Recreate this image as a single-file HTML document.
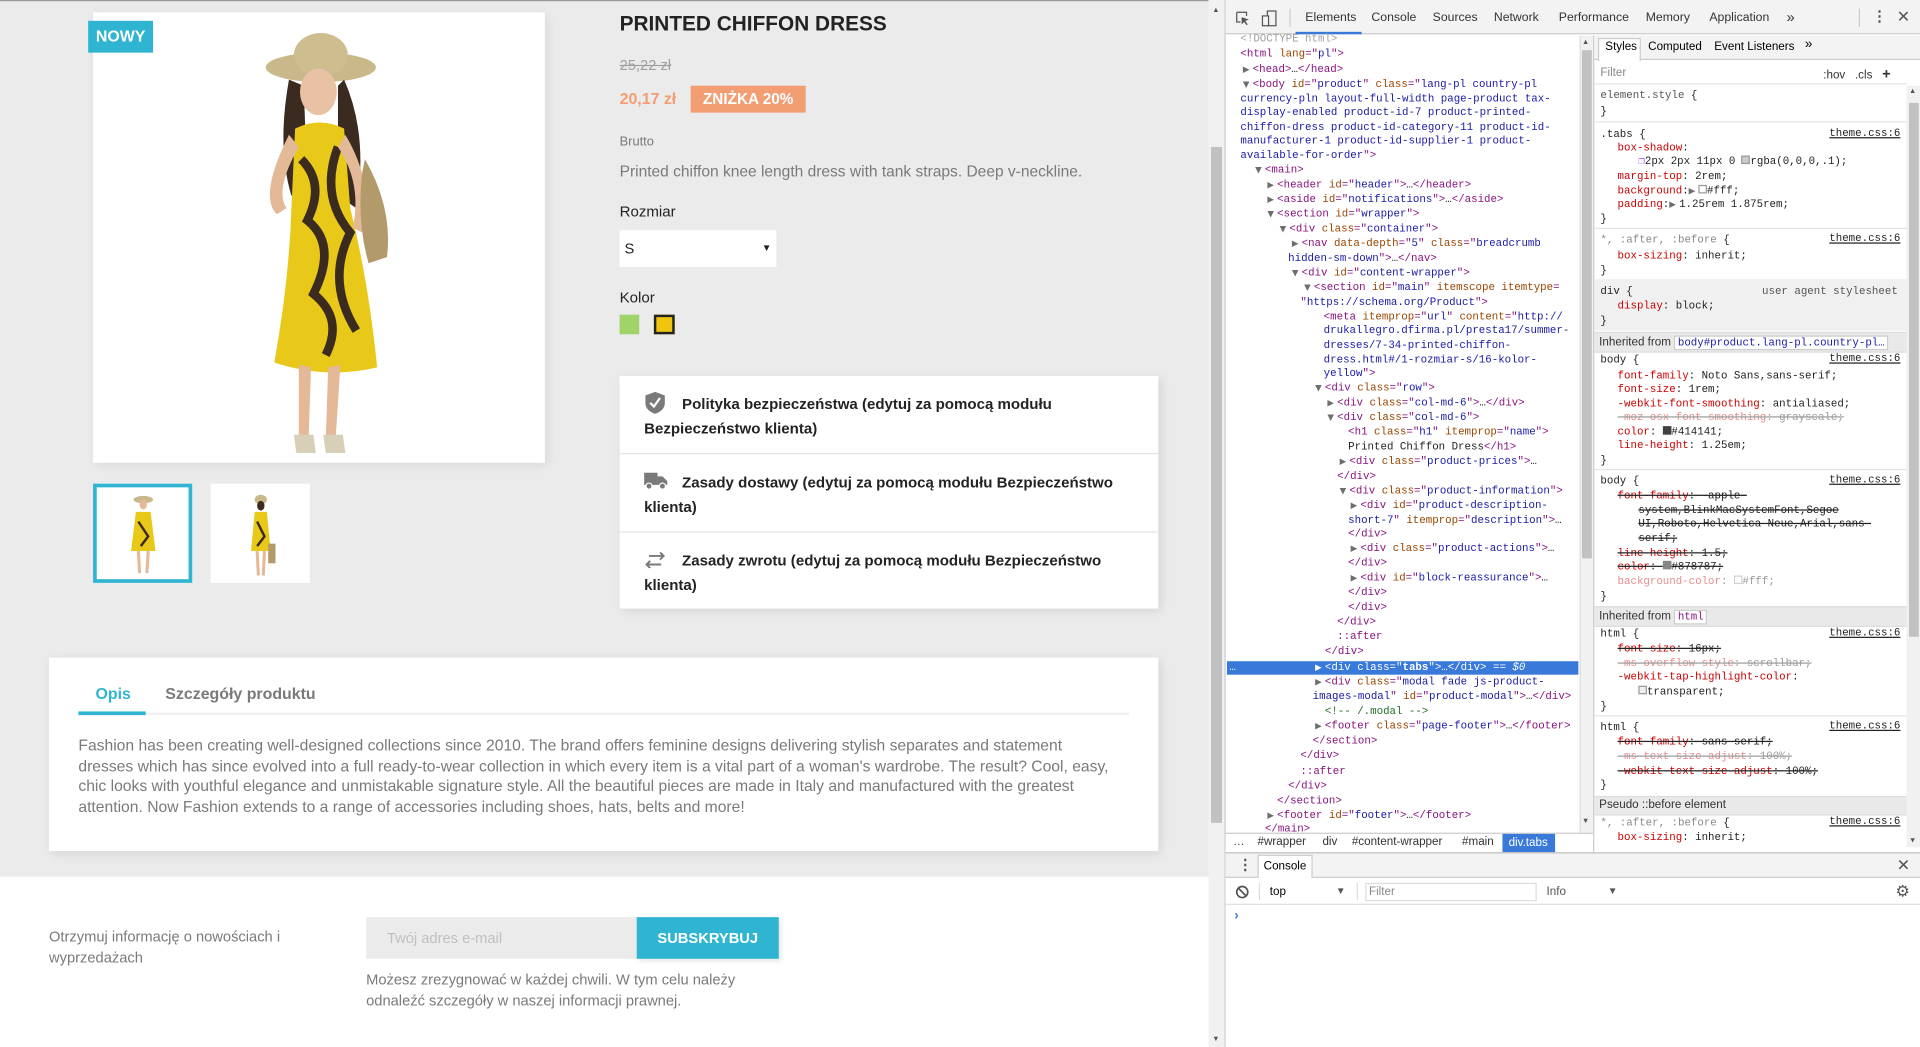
<!DOCTYPE html>
<html><head><meta charset="utf-8">
<style>
*{box-sizing:border-box;margin:0;padding:0}
html,body{width:1920px;height:1047px;overflow:hidden;background:#fff}
#root{position:absolute;left:0;top:0;width:1568px;height:855px;transform:scale(1.22449);transform-origin:0 0;font-family:"Liberation Sans","Noto Sans CJK SC",sans-serif;overflow:hidden}
.abs{position:absolute}
.page{left:0;top:0;width:987px;height:855px;background:#fff}
.main{left:0;top:0;width:987px;height:716px;background:#ebebeb}
.nw{white-space:nowrap}
.dt{left:1000px;top:0;width:568px;height:855px;background:#fff;border-left:1px solid #ccc;font-family:"Liberation Sans",sans-serif;font-size:10px;color:#333}
.l{position:absolute;white-space:nowrap;font-family:"Liberation Mono",monospace;font-size:8.8px;line-height:12px;color:#222}
.t{color:#881280}.a{color:#994500}.v{color:#1a1aa6}.g{color:#a0a0a0}.c{color:#236e25}
.tr{display:inline-block;width:8px;font-size:7px;color:#6e6e6e;font-family:"DejaVu Sans",sans-serif}
.p{color:#c80000}.s{text-decoration:line-through}.f{opacity:.45}
.lnk{position:absolute;right:16px;text-decoration:underline;color:#222;font-family:"Liberation Mono",monospace;font-size:8.8px}
.band{position:absolute;left:1302px;width:255px;background:#e9e9e9;border-top:1px solid #ddd;border-bottom:1px solid #ddd;font-size:9.5px;color:#333;white-space:nowrap;padding-left:4px}
</style></head><body><div id="root">

<div class="abs page"></div>
<div class="abs main"></div>
<div class="abs" style="left:0;top:0;width:987px;height:1px;background:#999"></div>

<div class="abs" style="left:76px;top:10px;width:369px;height:368px;background:#fff;box-shadow:2px 2px 8px rgba(0,0,0,.08)"></div>
<svg class="abs" style="left:76px;top:10px" width="369" height="368" viewBox="0 0 369 368">
<ellipse cx="186" cy="45" rx="45" ry="12" fill="#c9b98a"/><ellipse cx="186" cy="35" rx="22" ry="18" fill="#cdbd8f"/>
<path d="M160 55 Q150 110 162 150 L175 140 L172 60Z" fill="#3a2a20"/>
<path d="M205 55 Q225 100 215 160 L200 150 L200 60Z" fill="#3a2a20"/>
<ellipse cx="184" cy="65" rx="15" ry="19" fill="#e9c2a6"/>
<path d="M165 95 Q185 85 205 95 L210 160 Q225 220 232 290 Q190 300 148 286 Q160 220 162 160Z" fill="#e8c91a"/>
<path d="M170 120 Q190 140 175 170 Q200 190 180 230 Q205 250 190 280 M200 110 Q185 150 210 180 Q190 220 215 260" stroke="#3b2b1f" stroke-width="7" fill="none"/>
<path d="M160 100 Q135 150 150 165 L158 160 Q148 145 168 110Z" fill="#e4b998"/>
<path d="M206 100 Q230 140 220 180 L212 176 Q220 140 200 110Z" fill="#e4b998"/>
<path d="M222 120 Q245 160 240 200 L225 205 Q215 170 220 130Z" fill="#b39a6a"/>
<path d="M168 288 L178 290 L176 350 L168 350Z M192 290 L202 288 L198 350 L190 350Z" fill="#e4b998"/>
<path d="M164 345 L180 345 L182 360 L166 360Z M188 345 L204 345 L206 360 L190 360Z" fill="#d8cfb8"/>
</svg>
<div class="abs" style="left:72px;top:17px;width:53px;height:26px;background:#2fb5d2;color:#fff;font-weight:bold;font-size:13px;line-height:26px;text-align:center">NOWY</div>

<div class="abs" style="left:76px;top:395px;width:81px;height:81px;background:#fff;border:3px solid #2fb5d2"></div>
<svg class="abs" style="left:79px;top:398px" width="75" height="75"><ellipse cx="38" cy="10" rx="8" ry="3" fill="#c9b98a"/><ellipse cx="38" cy="14" rx="3" ry="4" fill="#e4b998"/><path d="M32 20 L44 20 L48 52 L28 52Z" fill="#e8c91a"/><path d="M34 28 L42 40 L36 48" stroke="#3b2b1f" stroke-width="2" fill="none"/><path d="M34 52 L35 70 M42 52 L41 70" stroke="#e4b998" stroke-width="2.5"/></svg>
<div class="abs" style="left:172px;top:395px;width:81px;height:81px;background:#fff"></div>
<svg class="abs" style="left:175px;top:398px" width="75" height="75"><ellipse cx="38" cy="10" rx="5" ry="4" fill="#c9b98a"/><ellipse cx="38" cy="15" rx="3" ry="4" fill="#3a2a20"/><path d="M33 20 L43 20 L46 52 L30 52Z" fill="#e8c91a"/><path d="M35 28 L41 40 L35 48" stroke="#3b2b1f" stroke-width="2" fill="none"/><path d="M44 46 L50 46 L50 62 L44 62Z" fill="#b39a6a"/><path d="M35 52 L36 72 M41 52 L40 72" stroke="#e4b998" stroke-width="2.5"/></svg>

<div class="abs nw" style="left:506px;top:10px;font-size:17px;font-weight:bold;color:#232323;line-height:20px">PRINTED CHIFFON DRESS</div>
<div class="abs nw" style="left:506px;top:46px;font-size:12px;color:#a0a0a0;text-decoration:line-through">25,22 zł</div>
<div class="abs nw" style="left:506px;top:73px;font-size:13px;color:#f39d72;font-weight:bold">20,17 zł</div>
<div class="abs nw" style="left:564px;top:70px;width:94px;height:22px;background:#f39d72;color:#fff;font-weight:bold;font-size:12.5px;line-height:22px;text-align:center">ZNIŻKA 20%</div>
<div class="abs nw" style="left:506px;top:110px;font-size:10.5px;color:#7a7a7a">Brutto</div>
<div class="abs nw" style="left:506px;top:133px;font-size:12.7px;color:#7a7a7a">Printed chiffon knee length dress with tank straps. Deep v-neckline.</div>
<div class="abs nw" style="left:506px;top:166px;font-size:12.3px;color:#232323">Rozmiar</div>
<div class="abs" style="left:506px;top:188px;width:128px;height:30px;background:#fff;font-size:12px;color:#232323;line-height:30px;padding-left:4px">S<span style="position:absolute;right:4px;font-size:8px">▼</span></div>
<div class="abs nw" style="left:506px;top:236px;font-size:12.3px;color:#232323">Kolor</div>
<div class="abs" style="left:506px;top:257px;width:16px;height:16px;background:#a0d468"></div>
<div class="abs" style="left:534px;top:257px;width:17px;height:16px;background:#f1c40f;border:2px solid #232323"></div>

<div class="abs" style="left:506px;top:307px;width:440px;height:190px;background:#fff;box-shadow:2px 2px 8px rgba(0,0,0,.1)"></div>
<div class="abs" style="left:506px;top:370px;width:440px;height:1px;background:#e5e5e5"></div>
<div class="abs" style="left:506px;top:434px;width:440px;height:1px;background:#e5e5e5"></div>
<svg class="abs" style="left:527px;top:320px" width="16" height="18" viewBox="0 0 16 18"><path d="M8 0 L16 3 L16 9 Q16 15 8 18 Q0 15 0 9 L0 3Z" fill="#7a7a7a"/><path d="M4 9 L7 12 L12 5" stroke="#fff" stroke-width="1.8" fill="none"/></svg>
<svg class="abs" style="left:526px;top:386px" width="19" height="14" viewBox="0 0 19 14"><rect x="0" y="0" width="11" height="10" fill="#7a7a7a"/><path d="M11 3 L15 3 L19 7 L19 10 L11 10Z" fill="#7a7a7a"/><circle cx="4" cy="11" r="2.5" fill="#7a7a7a" stroke="#fff"/><circle cx="15" cy="11" r="2.5" fill="#7a7a7a" stroke="#fff"/></svg>
<svg class="abs" style="left:527px;top:451px" width="16" height="13" viewBox="0 0 16 13"><path d="M3 3 H15 M12 0 L15 3 L12 6 M13 10 H1 M4 7 L1 10 L4 13" stroke="#7a7a7a" stroke-width="1.6" fill="none"/></svg>
<div class="abs nw" style="left:526px;top:320px;font-size:12.3px;font-weight:bold;color:#232323;line-height:20px"><span style="padding-left:31px"></span>Polityka bezpieczeństwa (edytuj za pomocą modułu<br>Bezpieczeństwo klienta)</div>
<div class="abs nw" style="left:526px;top:384px;font-size:12.3px;font-weight:bold;color:#232323;line-height:20px"><span style="padding-left:31px"></span>Zasady dostawy (edytuj za pomocą modułu Bezpieczeństwo<br>klienta)</div>
<div class="abs nw" style="left:526px;top:448px;font-size:12.3px;font-weight:bold;color:#232323;line-height:20px"><span style="padding-left:31px"></span>Zasady zwrotu (edytuj za pomocą modułu Bezpieczeństwo<br>klienta)</div>

<div class="abs" style="left:40px;top:537px;width:906px;height:158px;background:#fff;box-shadow:2px 2px 8px rgba(0,0,0,.1)"></div>
<div class="abs" style="left:64px;top:582px;width:858px;height:2px;background:#f1f1f1"></div>
<div class="abs" style="left:64px;top:581px;width:55px;height:3px;background:#2fb5d2"></div>
<div class="abs nw" style="left:78px;top:559px;font-size:13px;font-weight:bold;color:#2fb5d2">Opis</div>
<div class="abs nw" style="left:135px;top:559px;font-size:13px;font-weight:bold;color:#7a7a7a">Szczegóły produktu</div>
<div class="abs nw" style="left:64px;top:601px;font-size:12.8px;line-height:16.5px;color:#7a7a7a">Fashion has been creating well-designed collections since 2010. The brand offers feminine designs delivering stylish separates and statement<br>dresses which has since evolved into a full ready-to-wear collection in which every item is a vital part of a woman's wardrobe. The result? Cool, easy,<br>chic looks with youthful elegance and unmistakable signature style. All the beautiful pieces are made in Italy and manufactured with the greatest<br>attention. Now Fashion extends to a range of accessories including shoes, hats, belts and more!</div>

<div class="abs nw" style="left:40px;top:757px;font-size:12px;line-height:16.5px;color:#7a7a7a">Otrzymuj informację o nowościach i<br>wyprzedażach</div>
<div class="abs nw" style="left:299px;top:749px;width:221px;height:34px;background:#ebebeb;font-size:12px;line-height:34px;color:#c0c0c0;padding-left:17px">Twój adres e-mail</div>
<div class="abs nw" style="left:520px;top:749px;width:116px;height:34px;background:#2fb5d2;font-size:12px;font-weight:bold;line-height:34px;color:#fff;text-align:center;box-shadow:2px 2px 4px rgba(0,0,0,.1)">SUBSKRYBUJ</div>
<div class="abs nw" style="left:299px;top:792px;font-size:12px;line-height:16.5px;color:#7a7a7a">Możesz zrezygnować w każdej chwili. W tym celu należy<br>odnaleźć szczegóły w naszej informacji prawnej.</div>

<div class="abs" style="left:987px;top:0;width:13px;height:855px;background:#f1f1f1"></div>
<div class="abs" style="left:989px;top:120px;width:9px;height:552px;background:#c1c1c1"></div>
<div class="abs" style="left:990px;top:6px;font-size:6px;color:#555">▲</div>
<div class="abs" style="left:990px;top:846px;font-size:6px;color:#555">▼</div>

<div class="abs dt"></div>
<div class="abs" style="left:1001px;top:0;width:567px;height:28px;background:#f3f3f3;border-bottom:1px solid #ccc"></div>
<svg class="abs" style="left:1009px;top:9px" width="12" height="12"><path d="M1 1 H9 V4 M1 1 V9 H4" stroke="#555" fill="none"/><path d="M5 5 L11 7 L8 8 L10 11 L9 11.5 L7 9 L5 11Z" fill="#555"/></svg>
<svg class="abs" style="left:1030px;top:8px" width="14" height="14"><rect x="5" y="1" width="7" height="12" stroke="#555" fill="none"/><rect x="1" y="5" width="5" height="8" stroke="#555" fill="#f3f3f3"/></svg>
<div class="abs" style="left:1053px;top:7px;width:1px;height:15px;background:#ccc"></div>
<div class="abs nw" style="left:1066px;top:9px;font-size:10px;color:#333">Elements</div>
<div class="abs" style="left:1058px;top:26px;width:54px;height:2px;background:#3879d9"></div>
<div class="abs nw" style="left:1120px;top:9px;font-size:10px;color:#333">Console</div>
<div class="abs nw" style="left:1170px;top:9px;font-size:10px;color:#333">Sources</div>
<div class="abs nw" style="left:1220px;top:9px;font-size:10px;color:#333">Network</div>
<div class="abs nw" style="left:1273px;top:9px;font-size:10px;color:#333">Performance</div>
<div class="abs nw" style="left:1344px;top:9px;font-size:10px;color:#333">Memory</div>
<div class="abs nw" style="left:1396px;top:9px;font-size:10px;color:#333">Application</div>
<div class="abs nw" style="left:1459px;top:7px;font-size:12px;color:#333">»</div>
<div class="abs" style="left:1518px;top:7px;width:1px;height:15px;background:#ccc"></div>
<div class="abs nw" style="left:1529px;top:6px;font-size:12px;color:#555;font-weight:bold">⋮</div>
<div class="abs nw" style="left:1549px;top:6px;font-size:13px;color:#555">✕</div>

<div class="l g" style="top:26px;left:1013px">&lt;!DOCTYPE html&gt;</div>
<div class="l" style="top:38px;left:1013px"><span class="t">&lt;html</span> <span class="a">lang</span><span class="t">="</span><span class="v">pl</span><span class="t">"&gt;</span></div>
<div class="l" style="top:51px;left:1015px"><span class="tr">▶</span><span class="t">&lt;head&gt;</span>…<span class="t">&lt;/head&gt;</span></div>
<div class="l" style="top:63px;left:1015px"><span class="tr">▼</span><span class="t">&lt;body</span> <span class="a">id</span><span class="t">="</span><span class="v">product</span><span class="t">"</span> <span class="a">class</span><span class="t">="</span><span class="v">lang-pl country-pl</span></div>
<div class="l v" style="top:75px;left:1013px">currency-pln layout-full-width page-product tax-</div>
<div class="l v" style="top:86px;left:1013px">display-enabled product-id-7 product-printed-</div>
<div class="l v" style="top:98px;left:1013px">chiffon-dress product-id-category-11 product-id-</div>
<div class="l v" style="top:109px;left:1013px">manufacturer-1 product-id-supplier-1 product-</div>
<div class="l" style="top:121px;left:1013px"><span class="v">available-for-order</span><span class="t">"&gt;</span></div>
<div class="l" style="top:133px;left:1025px"><span class="tr">▼</span><span class="t">&lt;main&gt;</span></div>
<div class="l" style="top:145px;left:1035px"><span class="tr">▶</span><span class="t">&lt;header</span> <span class="a">id</span><span class="t">="</span><span class="v">header</span><span class="t">"&gt;</span>…<span class="t">&lt;/header&gt;</span></div>
<div class="l" style="top:157px;left:1035px"><span class="tr">▶</span><span class="t">&lt;aside</span> <span class="a">id</span><span class="t">="</span><span class="v">notifications</span><span class="t">"&gt;</span>…<span class="t">&lt;/aside&gt;</span></div>
<div class="l" style="top:169px;left:1035px"><span class="tr">▼</span><span class="t">&lt;section</span> <span class="a">id</span><span class="t">="</span><span class="v">wrapper</span><span class="t">"&gt;</span></div>
<div class="l" style="top:181px;left:1045px"><span class="tr">▼</span><span class="t">&lt;div</span> <span class="a">class</span><span class="t">="</span><span class="v">container</span><span class="t">"&gt;</span></div>
<div class="l" style="top:193px;left:1055px"><span class="tr">▶</span><span class="t">&lt;nav</span> <span class="a">data-depth</span><span class="t">="</span><span class="v">5</span><span class="t">"</span> <span class="a">class</span><span class="t">="</span><span class="v">breadcrumb</span></div>
<div class="l" style="top:205px;left:1052px"><span class="v">hidden-sm-down</span><span class="t">"&gt;</span>…<span class="t">&lt;/nav&gt;</span></div>
<div class="l" style="top:217px;left:1055px"><span class="tr">▼</span><span class="t">&lt;div</span> <span class="a">id</span><span class="t">="</span><span class="v">content-wrapper</span><span class="t">"&gt;</span></div>
<div class="l" style="top:229px;left:1065px"><span class="tr">▼</span><span class="t">&lt;section</span> <span class="a">id</span><span class="t">="</span><span class="v">main</span><span class="t">"</span> <span class="a">itemscope itemtype</span><span class="t">=</span></div>
<div class="l" style="top:241px;left:1062px"><span class="t">"</span><span class="v">https://schema.org/Product</span><span class="t">"&gt;</span></div>
<div class="l" style="top:253px;left:1081px"><span class="t">&lt;meta</span> <span class="a">itemprop</span><span class="t">="</span><span class="v">url</span><span class="t">"</span> <span class="a">content</span><span class="t">="</span><span class="v">http://</span></div>
<div class="l v" style="top:264px;left:1081px">drukallegro.dfirma.pl/presta17/summer-</div>
<div class="l v" style="top:276px;left:1081px">dresses/7-34-printed-chiffon-</div>
<div class="l v" style="top:288px;left:1081px">dress.html#/1-rozmiar-s/16-kolor-</div>
<div class="l" style="top:299px;left:1081px"><span class="v">yellow</span><span class="t">"&gt;</span></div>
<div class="l" style="top:311px;left:1074px"><span class="tr">▼</span><span class="t">&lt;div</span> <span class="a">class</span><span class="t">="</span><span class="v">row</span><span class="t">"&gt;</span></div>
<div class="l" style="top:323px;left:1084px"><span class="tr">▶</span><span class="t">&lt;div</span> <span class="a">class</span><span class="t">="</span><span class="v">col-md-6</span><span class="t">"&gt;</span>…<span class="t">&lt;/div&gt;</span></div>
<div class="l" style="top:335px;left:1084px"><span class="tr">▼</span><span class="t">&lt;div</span> <span class="a">class</span><span class="t">="</span><span class="v">col-md-6</span><span class="t">"&gt;</span></div>
<div class="l" style="top:347px;left:1101px"><span class="t">&lt;h1</span> <span class="a">class</span><span class="t">="</span><span class="v">h1</span><span class="t">"</span> <span class="a">itemprop</span><span class="t">="</span><span class="v">name</span><span class="t">"&gt;</span></div>
<div class="l" style="top:359px;left:1101px">Printed Chiffon Dress<span class="t">&lt;/h1&gt;</span></div>
<div class="l" style="top:371px;left:1094px"><span class="tr">▶</span><span class="t">&lt;div</span> <span class="a">class</span><span class="t">="</span><span class="v">product-prices</span><span class="t">"&gt;</span>…</div>
<div class="l t" style="top:383px;left:1092px">&lt;/div&gt;</div>
<div class="l" style="top:395px;left:1094px"><span class="tr">▼</span><span class="t">&lt;div</span> <span class="a">class</span><span class="t">="</span><span class="v">product-information</span><span class="t">"&gt;</span></div>
<div class="l" style="top:407px;left:1103px"><span class="tr">▶</span><span class="t">&lt;div</span> <span class="a">id</span><span class="t">="</span><span class="v">product-description-</span></div>
<div class="l" style="top:419px;left:1101px"><span class="v">short-7</span><span class="t">"</span> <span class="a">itemprop</span><span class="t">="</span><span class="v">description</span><span class="t">"&gt;</span>…</div>
<div class="l t" style="top:430px;left:1101px">&lt;/div&gt;</div>
<div class="l" style="top:442px;left:1103px"><span class="tr">▶</span><span class="t">&lt;div</span> <span class="a">class</span><span class="t">="</span><span class="v">product-actions</span><span class="t">"&gt;</span>…</div>
<div class="l t" style="top:454px;left:1101px">&lt;/div&gt;</div>
<div class="l" style="top:466px;left:1103px"><span class="tr">▶</span><span class="t">&lt;div</span> <span class="a">id</span><span class="t">="</span><span class="v">block-reassurance</span><span class="t">"&gt;</span>…</div>
<div class="l t" style="top:478px;left:1101px">&lt;/div&gt;</div>
<div class="l t" style="top:490px;left:1101px">&lt;/div&gt;</div>
<div class="l t" style="top:502px;left:1092px">&lt;/div&gt;</div>
<div class="l t" style="top:514px;left:1092px">::after</div>
<div class="l t" style="top:526px;left:1082px">&lt;/div&gt;</div>
<div class="abs" style="left:1002px;top:540px;width:287px;height:11px;background:#3879d9"></div>
<div class="l" style="top:539px;left:1004px;color:#fff">…</div>
<div class="l" style="top:539px;left:1074px;color:#fff"><span class="tr" style="color:#fff">▶</span>&lt;div class="<b>tabs</b>"&gt;…&lt;/div&gt; == <i>$0</i></div>
<div class="l" style="top:551px;left:1074px"><span class="tr">▶</span><span class="t">&lt;div</span> <span class="a">class</span><span class="t">="</span><span class="v">modal fade js-product-</span></div>
<div class="l" style="top:563px;left:1072px"><span class="v">images-modal</span><span class="t">"</span> <span class="a">id</span><span class="t">="</span><span class="v">product-modal</span><span class="t">"&gt;</span>…<span class="t">&lt;/div&gt;</span></div>
<div class="l c" style="top:575px;left:1082px">&lt;!-- /.modal --&gt;</div>
<div class="l" style="top:587px;left:1074px"><span class="tr">▶</span><span class="t">&lt;footer</span> <span class="a">class</span><span class="t">="</span><span class="v">page-footer</span><span class="t">"&gt;</span>…<span class="t">&lt;/footer&gt;</span></div>
<div class="l t" style="top:599px;left:1072px">&lt;/section&gt;</div>
<div class="l t" style="top:611px;left:1062px">&lt;/div&gt;</div>
<div class="l t" style="top:624px;left:1062px">::after</div>
<div class="l t" style="top:636px;left:1052px">&lt;/div&gt;</div>
<div class="l t" style="top:648px;left:1043px">&lt;/section&gt;</div>
<div class="l" style="top:660px;left:1035px"><span class="tr">▶</span><span class="t">&lt;footer</span> <span class="a">id</span><span class="t">="</span><span class="v">footer</span><span class="t">"&gt;</span>…<span class="t">&lt;/footer&gt;</span></div>
<div class="l t" style="top:671px;left:1033px">&lt;/main&gt;</div>
<div class="abs" style="left:1290px;top:29px;width:11px;height:652px;background:#f1f1f1;border-left:1px solid #ddd"></div>
<div class="abs" style="left:1292px;top:41px;width:8px;height:415px;background:#c1c1c1"></div>
<div class="abs" style="left:1292px;top:32px;font-size:6px;color:#555">▲</div>
<div class="abs" style="left:1292px;top:668px;font-size:6px;color:#555">▼</div>
<div class="abs" style="left:1001px;top:680px;width:300px;height:16px;background:#fff;border-top:1px solid #ccc"></div>
<div class="abs nw" style="left:1007px;top:682px;font-size:9.5px;color:#333">…</div>
<div class="abs nw" style="left:1027px;top:682px;font-size:9.5px;color:#333">#wrapper</div>
<div class="abs nw" style="left:1080px;top:682px;font-size:9.5px;color:#333">div</div>
<div class="abs nw" style="left:1104px;top:682px;font-size:9.5px;color:#333">#content-wrapper</div>
<div class="abs nw" style="left:1194px;top:682px;font-size:9.5px;color:#333">#main</div>
<div class="abs nw" style="left:1227px;top:681px;width:43px;height:15px;background:#3879d9;font-size:9.5px;color:#fff;line-height:15px;padding-left:5px">div.tabs</div>

<div class="abs" style="left:1301px;top:29px;width:1px;height:667px;background:#ccc"></div>
<div class="abs" style="left:1302px;top:29px;width:266px;height:20px;background:#f3f3f3;border-bottom:1px solid #ccc"></div>
<div class="abs" style="left:1305px;top:31px;width:35px;height:19px;background:#fff;border:1px solid #ccc;border-bottom:none"></div>
<div class="abs nw" style="left:1311px;top:33px;font-size:9.5px">Styles</div>
<div class="abs nw" style="left:1346px;top:33px;font-size:9.5px">Computed</div>
<div class="abs nw" style="left:1400px;top:33px;font-size:9.5px">Event Listeners</div>
<div class="abs nw" style="left:1474px;top:30px;font-size:11px">»</div>
<div class="abs nw" style="left:1307px;top:54px;font-size:9.5px;color:#888">Filter</div>
<div class="abs nw" style="left:1489px;top:53px;font-size:9.5px;color:#333">:hov &nbsp;&nbsp;.cls &nbsp;&nbsp;<b style="font-size:12px">+</b></div>
<div class="abs" style="left:1302px;top:68px;width:255px;height:1px;background:#e5e5e5"></div>
<div class="abs" style="left:1557px;top:70px;width:11px;height:622px;background:#f1f1f1"></div>
<div class="abs" style="left:1559px;top:84px;width:8px;height:436px;background:#c1c1c1"></div>
<div class="abs" style="left:1559px;top:72px;font-size:6px;color:#555">▲</div>
<div class="abs" style="left:1559px;top:684px;font-size:6px;color:#555">▼</div>

<div class="l" style="top:72px;left:1307px"><span class="g" style="color:#555">element.style</span> {</div>
<div class="l" style="top:85px;left:1307px">}</div>
<div class="abs" style="left:1302px;top:99px;width:255px;height:1px;background:#e5e5e5"></div>
<div class="l" style="top:104px;left:1307px">.tabs {</div><div class="lnk" style="top:104px">theme.css:6</div>
<div class="l" style="top:115px;left:1321px"><span class="p">box-shadow</span>:</div>
<div class="l" style="top:126px;left:1338px"><span style="color:#a040ff">❐</span>2px 2px 11px 0 <span style="display:inline-block;width:7px;height:7px;border:1px solid #999;background:#ccc"></span>rgba(0,0,0,.1);</div>
<div class="l" style="top:138px;left:1321px"><span class="p">margin-top</span>: 2rem;</div>
<div class="l" style="top:150px;left:1321px"><span class="p">background</span>:<span class="tr">▶</span><span style="display:inline-block;width:7px;height:7px;border:1px solid #999;background:#fff"></span>#fff;</div>
<div class="l" style="top:161px;left:1321px"><span class="p">padding</span>:<span class="tr">▶</span>1.25rem 1.875rem;</div>
<div class="l" style="top:173px;left:1307px">}</div>
<div class="abs" style="left:1302px;top:186px;width:255px;height:1px;background:#e5e5e5"></div>
<div class="l" style="top:190px;left:1307px"><span style="color:#888">*, :after, :before</span> {</div><div class="lnk" style="top:190px">theme.css:6</div>
<div class="l" style="top:203px;left:1321px"><span class="p">box-sizing</span>: inherit;</div>
<div class="l" style="top:215px;left:1307px">}</div>
<div class="abs" style="left:1302px;top:228px;width:255px;height:42px;background:#f0f0f0"></div>
<div class="l" style="top:232px;left:1307px">div {</div><div class="l" style="top:232px;left:1439px;color:#555">user agent stylesheet</div>
<div class="l" style="top:244px;left:1321px"><span class="p">display</span>: block;</div>
<div class="l" style="top:256px;left:1307px">}</div>
<div class="band" style="top:271px;height:17px;line-height:15px">Inherited from <span style="background:#fff;border:1px solid #ccc;padding:0 2px;font-family:'Liberation Mono',monospace;font-size:8.8px;color:#1a1aa6">body#product.lang-pl.country-pl…</span></div>
<div class="l" style="top:288px;left:1307px">body {</div><div class="lnk" style="top:288px">theme.css:6</div>
<div class="l" style="top:301px;left:1321px"><span class="p">font-family</span>: Noto Sans,sans-serif;</div>
<div class="l" style="top:312px;left:1321px"><span class="p">font-size</span>: 1rem;</div>
<div class="l" style="top:324px;left:1321px"><span class="p">-webkit-font-smoothing</span>: antialiased;</div>
<div class="l s f" style="top:335px;left:1321px"><span class="p">-moz-osx-font-smoothing</span>: grayscale;</div>
<div class="l" style="top:347px;left:1321px"><span class="p">color</span>: <span style="display:inline-block;width:7px;height:7px;background:#414141"></span>#414141;</div>
<div class="l" style="top:358px;left:1321px"><span class="p">line-height</span>: 1.25em;</div>
<div class="l" style="top:370px;left:1307px">}</div>
<div class="abs" style="left:1302px;top:383px;width:255px;height:1px;background:#e5e5e5"></div>
<div class="l" style="top:387px;left:1307px">body {</div><div class="lnk" style="top:387px">theme.css:6</div>
<div class="l s" style="top:399px;left:1321px"><span class="p">font-family</span>: -apple-</div>
<div class="l s" style="top:411px;left:1338px">system,BlinkMacSystemFont,Segoe</div>
<div class="l s" style="top:422px;left:1338px">UI,Roboto,Helvetica Neue,Arial,sans-</div>
<div class="l s" style="top:434px;left:1338px">serif;</div>
<div class="l s" style="top:446px;left:1321px"><span class="p">line-height</span>: 1.5;</div>
<div class="l s" style="top:457px;left:1321px"><span class="p">color</span>: <span style="display:inline-block;width:7px;height:7px;background:#878787"></span>#878787;</div>
<div class="l f" style="top:469px;left:1321px"><span class="p">background-color</span>: <span style="display:inline-block;width:7px;height:7px;border:1px solid #999"></span>#fff;</div>
<div class="l" style="top:481px;left:1307px">}</div>
<div class="band" style="top:495px;height:17px;line-height:15px">Inherited from <span style="background:#fff;border:1px solid #ccc;padding:0 2px;font-family:'Liberation Mono',monospace;font-size:8.8px;color:#881280">html</span></div>
<div class="l" style="top:512px;left:1307px">html {</div><div class="lnk" style="top:512px">theme.css:6</div>
<div class="l s" style="top:524px;left:1321px"><span class="p">font-size</span>: 16px;</div>
<div class="l s f" style="top:536px;left:1321px"><span class="p">-ms-overflow-style</span>: scrollbar;</div>
<div class="l" style="top:547px;left:1321px"><span class="p">-webkit-tap-highlight-color</span>:</div>
<div class="l" style="top:559px;left:1338px"><span style="display:inline-block;width:7px;height:7px;border:1px solid #999;background:#eee"></span>transparent;</div>
<div class="l" style="top:571px;left:1307px">}</div>
<div class="abs" style="left:1302px;top:584px;width:255px;height:1px;background:#e5e5e5"></div>
<div class="l" style="top:588px;left:1307px">html {</div><div class="lnk" style="top:588px">theme.css:6</div>
<div class="l s" style="top:600px;left:1321px"><span class="p">font-family</span>: sans-serif;</div>
<div class="l s f" style="top:612px;left:1321px"><span class="p">-ms-text-size-adjust</span>: 100%;</div>
<div class="l s" style="top:624px;left:1321px"><span class="p">-webkit-text-size-adjust</span>: 100%;</div>
<div class="l" style="top:635px;left:1307px">}</div>
<div class="band" style="top:650px;height:16px;line-height:14px">Pseudo ::before element</div>
<div class="l" style="top:666px;left:1307px"><span style="color:#888">*, :after, :before</span> {</div><div class="lnk" style="top:666px">theme.css:6</div>
<div class="l" style="top:678px;left:1321px"><span class="p">box-sizing</span>: inherit;</div>

<div class="abs" style="left:1001px;top:696px;width:567px;height:159px;background:#fff;border-top:1px solid #bbb"></div>
<div class="abs" style="left:1001px;top:697px;width:567px;height:20px;background:#f3f3f3;border-bottom:1px solid #ccc"></div>
<div class="abs nw" style="left:1011px;top:699px;font-size:12px;color:#555;font-weight:bold">⋮</div>
<div class="abs" style="left:1027px;top:698px;width:45px;height:19px;background:#fff;border:1px solid #ccc;border-bottom:none"></div>
<div class="abs nw" style="left:1032px;top:702px;font-size:9.5px">Console</div>
<div class="abs nw" style="left:1549px;top:699px;font-size:13px;color:#555">✕</div>
<div class="abs" style="left:1001px;top:718px;width:567px;height:21px;background:#fff;border-bottom:1px solid #e0e0e0"></div>
<svg class="abs" style="left:1009px;top:723px" width="11" height="11"><circle cx="5.5" cy="5.5" r="4.5" stroke="#555" stroke-width="1.4" fill="none"/><path d="M2.5 2.5 L8.5 8.5" stroke="#555" stroke-width="1.4"/></svg>
<div class="abs" style="left:1028px;top:721px;width:1px;height:14px;background:#ddd"></div>
<div class="abs nw" style="left:1037px;top:723px;font-size:9.5px">top</div>
<div class="abs nw" style="left:1091px;top:723px;font-size:8px;color:#555">▼</div>
<div class="abs" style="left:1108px;top:721px;width:1px;height:14px;background:#ddd"></div>
<div class="abs" style="left:1115px;top:721px;width:140px;height:15px;border:1px solid #ddd"></div>
<div class="abs nw" style="left:1118px;top:723px;font-size:9.5px;color:#888">Filter</div>
<div class="abs nw" style="left:1263px;top:723px;font-size:9.5px;color:#555">Info</div>
<div class="abs nw" style="left:1313px;top:723px;font-size:8px;color:#555">▼</div>
<div class="abs nw" style="left:1548px;top:720px;font-size:13px;color:#555">⚙</div>
<div class="abs nw" style="left:1008px;top:742px;font-size:11px;color:#3879d9;font-weight:bold">›</div>

</div></body></html>
